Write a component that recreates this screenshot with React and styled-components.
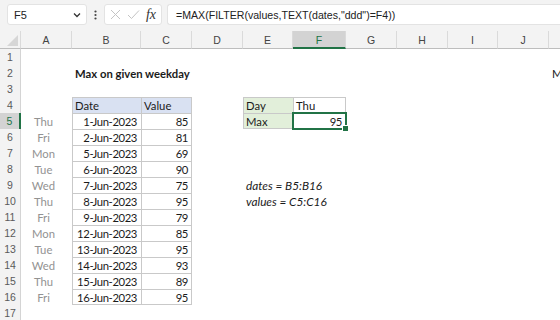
import React from 'react';
import styled, { createGlobalStyle } from 'styled-components';

const GlobalStyle = createGlobalStyle`
  html, body {
    margin: 0;
    padding: 0;
    background: #ffffff;
  }
  body {
    width: 560px;
    height: 320px;
    overflow: hidden;
    font-family: "Liberation Sans", Arial, sans-serif;
  }
`;

const GREEN = '#217346';
const LINE = '#c9c9c9';
const CELL_FONT = 'Lato, "Liberation Sans", Arial, sans-serif';

const COLS = ['A', 'B', 'C', 'D', 'E', 'F', 'G', 'H', 'I', 'J', 'K'];
// row header, then A..K
const WIDTHS = [21, 51, 69, 51, 51, 50, 53, 51, 51, 50, 51, 51];

const Window = styled.div`
  width: 560px;
  height: 320px;
  display: flex;
  flex-flow: column;
  overflow: hidden;
`;

const Toolbar = styled.div`
  height: 31px;
  flex-shrink: 0;
  background: #f3f3f3;
  display: flex;
  align-items: flex-start;
  padding: 4px 0 0 7px;
  box-sizing: border-box;
`;

const Box = styled.div`
  height: 21px;
  box-sizing: border-box;
  background: #ffffff;
  border: 1px solid #e3e3e3;
  border-radius: 3px;
  display: flex;
  align-items: center;
`;

const NameBox = styled(Box)`
  width: 80px;
  padding: 0 5px 0 6px;
  justify-content: space-between;
  font-size: 11px;
  color: #222;
`;

const Dots = styled.div`
  width: 17px;
  height: 21px;
  display: flex;
  align-items: center;
  justify-content: center;
`;

const FxBox = styled(Box)`
  width: 58px;
  padding: 0 4px 0 5px;
  justify-content: space-between;
`;

const Fx = styled.span`
  font-family: "Liberation Serif", "Times New Roman", serif;
  font-style: italic;
  font-size: 14px;
  color: #333;
  padding-right: 1px;
`;

const FormulaBox = styled(Box)`
  flex: 1;
  margin-left: 5px;
  border-right: none;
  border-radius: 3px 0 0 3px;
  padding-left: 8px;
  font-size: 10.6px;
  color: #222;
  white-space: nowrap;
`;

const Sheet = styled.div`
  display: grid;
  grid-template-columns: ${WIDTHS.map((w) => `${w}px`).join(' ')};
  grid-template-rows: 18px;
  grid-auto-rows: 16px;
`;

const Corner = styled.div`
  background: #f3f3f3;
  border-bottom: 1px solid #bdbdbd;
  border-right: 1px solid #dadada;
  box-sizing: border-box;
  display: flex;
  align-items: flex-end;
  justify-content: flex-end;
  padding: 0 2px 2px 0;
`;

const ColHead = styled.div`
  background: ${(p) => (p.$active ? '#d3d3d3' : '#f3f3f3')};
  border-bottom: ${(p) => (p.$active ? `2px solid ${GREEN}` : '1px solid #bdbdbd')};
  border-right: 1px solid #dadada;
  box-sizing: border-box;
  display: flex;
  align-items: center;
  justify-content: center;
  font-size: 10.5px;
  color: ${(p) => (p.$active ? GREEN : '#444')};
  padding-top: ${(p) => (p.$active ? '1px' : '0')};
`;

const RowHead = styled.div`
  background: ${(p) => (p.$active ? '#d3d3d3' : '#f3f3f3')};
  border-right: ${(p) => (p.$active ? `2px solid ${GREEN}` : '1px solid #d4d4d4')};
  box-sizing: border-box;
  display: flex;
  align-items: center;
  justify-content: center;
  font-size: 10.5px;
  color: ${(p) => (p.$active ? GREEN : '#5a5a5a')};
`;

const Cell = styled.div`
  position: relative;
  box-sizing: border-box;
  display: flex;
  align-items: center;
  justify-content: ${(p) =>
    p.$align === 'right' ? 'flex-end' : p.$align === 'center' ? 'center' : 'flex-start'};
  padding: ${(p) => (p.$align === 'center' ? '0 6px 0 0' : '0 4px 0 3px')};
  background: ${(p) => p.$fill || 'transparent'};
  box-shadow: ${(p) => p.$shadow || 'none'};
  font-family: ${CELL_FONT};
  font-size: ${(p) => (p.$italic ? '11.8px' : '11.3px')};
  font-weight: ${(p) => (p.$bold ? 700 : 400)};
  font-style: ${(p) => (p.$italic ? 'italic' : 'normal')};
  letter-spacing: ${(p) => (p.$num ? '-0.4px' : 'normal')};
  color: ${(p) => p.$color || '#1b1b1b'};
  white-space: nowrap;
  overflow: visible;
  z-index: ${(p) => (p.$selected ? 2 : 1)};
`;

const Selection = styled.div`
  position: absolute;
  left: -1px;
  top: -1px;
  right: -1px;
  bottom: -1px;
  border: 2px solid ${GREEN};
  pointer-events: none;
`;

const Handle = styled.div`
  position: absolute;
  right: -4px;
  bottom: -4px;
  width: 5px;
  height: 5px;
  background: ${GREEN};
  border: 1px solid #ffffff;
`;

const data = [
  ['Thu', '1-Jun-2023', 85],
  ['Fri', '2-Jun-2023', 81],
  ['Mon', '5-Jun-2023', 69],
  ['Tue', '6-Jun-2023', 90],
  ['Wed', '7-Jun-2023', 75],
  ['Thu', '8-Jun-2023', 95],
  ['Fri', '9-Jun-2023', 79],
  ['Mon', '12-Jun-2023', 85],
  ['Tue', '13-Jun-2023', 95],
  ['Wed', '14-Jun-2023', 93],
  ['Thu', '15-Jun-2023', 89],
  ['Fri', '16-Jun-2023', 95],
];

// build the cell map once
const cells = {
  B2: { v: 'Max on given weekday', bold: true },
  K2: { v: 'M' },
  B4: { v: 'Date', fill: '#d9e1f2', box: true },
  C4: { v: 'Value', fill: '#d9e1f2', box: true },
  E4: { v: 'Day', fill: '#e2efda', box: true },
  F4: { v: 'Thu', box: true },
  E5: { v: 'Max', fill: '#e2efda', box: true },
  F5: { v: 95, align: 'right', box: true, selected: true, num: true },
  E9: { v: 'dates = B5:B16', italic: true },
  E10: { v: 'values = C5:C16', italic: true },
};
data.forEach(([day, date, value], i) => {
  const r = i + 5;
  cells[`A${r}`] = { v: day, align: 'center', color: '#929292' };
  cells[`B${r}`] = { v: date, align: 'right', box: true, num: true };
  cells[`C${r}`] = { v: value, align: 'right', box: true, num: true };
});

const isBox = (col, row) => {
  const c = cells[`${col}${row}`];
  return c && c.box;
};

const borderFor = (col, row) => {
  if (!isBox(col, row)) return null;
  const idx = COLS.indexOf(col);
  const parts = [`inset 1px 1px 0 ${LINE}`];
  if (!isBox(COLS[idx + 1], row)) parts.push(`inset -1px 0 0 ${LINE}`);
  if (!isBox(col, row + 1)) parts.push(`inset 0 -1px 0 ${LINE}`);
  return parts.join(', ');
};

const Chevron = () => (
  <svg width="8" height="6" viewBox="0 0 8 6">
    <path d="M1 1.5 L4 4.5 L7 1.5" fill="none" stroke="#333" strokeWidth="1.3" />
  </svg>
);

const VDots = () => (
  <svg width="3" height="10" viewBox="0 0 3 10">
    <circle cx="1.5" cy="1.5" r="1.1" fill="#444" />
    <circle cx="1.5" cy="5" r="1.1" fill="#444" />
    <circle cx="1.5" cy="8.5" r="1.1" fill="#444" />
  </svg>
);

const Cross = () => (
  <svg width="11" height="11" viewBox="0 0 11 11">
    <path d="M1 1 L10 10 M10 1 L1 10" stroke="#c4c4c4" strokeWidth="1" fill="none" />
  </svg>
);

const Check = () => (
  <svg width="13" height="11" viewBox="0 0 13 11">
    <path d="M1 6 L4.5 9.5 L12 1.5" stroke="#c4c4c4" strokeWidth="1" fill="none" />
  </svg>
);

const CornerMark = () => (
  <svg width="11" height="11" viewBox="0 0 11 11">
    <polygon points="11,0 11,11 0,11" fill="#d6d6d6" />
  </svg>
);

const App = () => {
  const rows = [];
  for (let r = 1; r <= 17; r += 1) {
    rows.push(
      <RowHead key={`h${r}`} $active={r === 5}>
        {r}
      </RowHead>
    );
    COLS.forEach((col) => {
      const c = cells[`${col}${r}`] || {};
      rows.push(
        <Cell
          key={`${col}${r}`}
          $align={c.align}
          $fill={c.fill}
          $bold={c.bold}
          $italic={c.italic}
          $num={c.num}
          $color={c.color}
          $shadow={borderFor(col, r)}
          $selected={c.selected}
        >
          {c.v}
          {c.selected && (
            <Selection>
              <Handle />
            </Selection>
          )}
        </Cell>
      );
    });
  }

  return (
    <Window>
      <GlobalStyle />
      <Toolbar>
        <NameBox>
          <span>F5</span>
          <Chevron />
        </NameBox>
        <Dots>
          <VDots />
        </Dots>
        <FxBox>
          <Cross />
          <Check />
          <Fx>fx</Fx>
        </FxBox>
        <FormulaBox>=MAX(FILTER(values,TEXT(dates,"ddd")=F4))</FormulaBox>
      </Toolbar>
      <Sheet>
        <Corner>
          <CornerMark />
        </Corner>
        {COLS.map((col) => (
          <ColHead key={col} $active={col === 'F'}>
            {col}
          </ColHead>
        ))}
        {rows}
      </Sheet>
    </Window>
  );
};

export default App;
